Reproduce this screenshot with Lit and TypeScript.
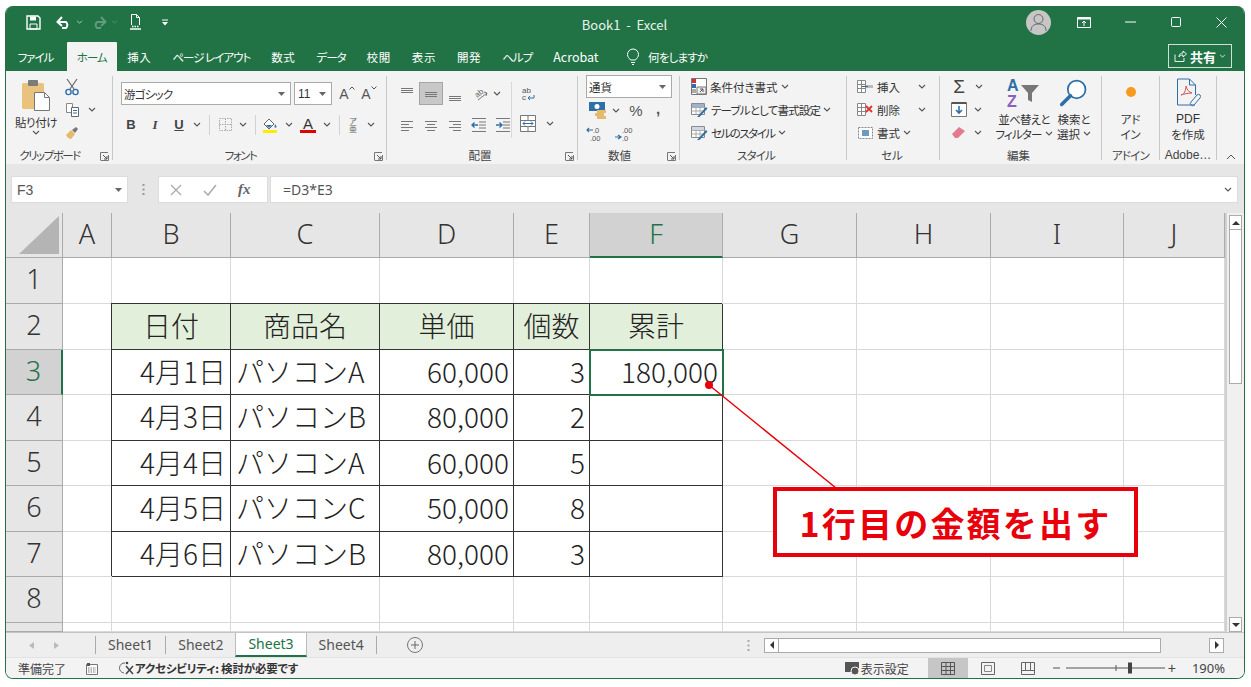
import { LitElement, html, svg, css } from 'lit';
import { customElement } from 'lit/decorators.js';

const ch = (c = '#555') => html`<svg width="8" height="5" viewBox="0 0 8 5"><path d="M1 1l3 3 3-3" fill="none" stroke="${c}" stroke-width="1.1"/></svg>`;
const launcher = html`<svg class="launch" width="9" height="9" viewBox="0 0 9 9"><path d="M.5 8V.5H8M.5 8.5h8V3" fill="none" stroke="#777"/><path d="M3 3l4 4M7 4v3H4" fill="none" stroke="#555"/></svg>`;
const lines = (ys: number[], x1s: number[], x2s: number[]) => html`<svg width="16" height="16" viewBox="0 0 16 16">${ys.map((y, i) => svg`<path d="M${x1s[i]} ${y + 0.5}H${x2s[i]}" stroke="#777" fill="none"/>`)}</svg>`;

const COLS = ['A', 'B', 'C', 'D', 'E', 'F', 'G', 'H', 'I', 'J'];
const TABLE = [
  ['日付', '商品名', '単価', '個数', '累計'],
  ['4月1日', 'パソコンA', '60,000', '3', '180,000'],
  ['4月3日', 'パソコンB', '80,000', '2', ''],
  ['4月4日', 'パソコンA', '60,000', '5', ''],
  ['4月5日', 'パソコンC', '50,000', '8', ''],
  ['4月6日', 'パソコンB', '80,000', '3', ''],
];
const TABS = [['挿入', 'j'], ['ページ レイアウト', 'k'], ['数式', 'j'], ['データ', 'k'], ['校閲', 'j'], ['表示', 'j'], ['開発', 'j'], ['ヘルプ', 'k'], ['Acrobat', 'l']];

@customElement('app-root')
export class AppRoot extends LitElement {
  static styles = css`
    :host { display: block; height: 687px; box-sizing: border-box; padding: 6px 6px 8px 5px; background: #fff; overflow: hidden;
      font-family: "Noto Sans CJK JP", "Noto Sans", sans-serif; font-feature-settings: "palt"; color: #333; font-size: 11.5px; }
    svg { display: block; flex: none; }
    .window { height: 673px; display: flex; flex-direction: column; border: 1px solid #217346; border-top: 0; border-radius: 8px; overflow: hidden; background: #f3f3f3; box-sizing: border-box; }
    .k1 { letter-spacing: -.8px; }
    .k2 { letter-spacing: -1.5px; }

    .title { height: 36px; background: #217346; color: #fff; display: flex; align-items: center; position: relative; padding-bottom: 4px; box-sizing: border-box; flex: none; }
    .qat { display: flex; align-items: center; padding-left: 20px; }
    .book { position: absolute; left: 0; right: 0; margin-left: -1px; text-align: center; font-size: 13px; top: 9px; line-height: 20px; color: #eaf3ee; }
    .win { margin-left: auto; display: flex; align-items: center; padding-right: 17px; }
    .avatar { width: 25px; height: 25px; border-radius: 50%; background: #c6c6c6; display: flex; align-items: center; justify-content: center; margin-right: 26px; }
    .tabs { height: 29px; background: #217346; color: #fff; display: flex; align-items: stretch; padding-left: 1px; flex: none; font-size: 11.5px; }
    .tab { padding: 0 10.5px; display: flex; align-items: center; white-space: nowrap; }
    .tab.k { letter-spacing: -1px; }
    .tab.j { letter-spacing: .6px; }
    .tab.l { font-size: 12.5px; }
    .tab.on { background: #f3f3f3; color: #217346; margin: 0 0 0 3px; padding: 0 10px; border-radius: 1px 1px 0 0; }
    .tell { display: flex; align-items: center; gap: 8px; margin-left: 17px; }
    .share { margin: 2px 12px 3px auto; width: 64px; box-sizing: border-box; border: 1px solid #cfe0d6; display: flex; align-items: center; justify-content: center; gap: 3px; font-weight: 700; font-size: 13px; }

    .ribbon { height: 93px; flex: none; display: grid; grid-template-columns: 107px 274px 191px 102px 167px 93px 162px 58px 57px 1fr; background: #f3f3f3; }
    .group { margin: 5px 0 4px; border-right: 1px solid #c8c8c8; display: flex; flex-direction: column; min-width: 0; }
    .group.end { border: 0; }
    .body { height: 72px; display: flex; box-sizing: border-box; }
    .label { height: 12px; line-height: 15px; position: relative; text-align: center; white-space: nowrap; font-size: 11.5px; color: #444; }
    .launch { position: absolute; right: 3px; top: 4px; }
    .col { display: flex; flex-direction: column; }
    .row { display: flex; align-items: center; height: 23px; }
    .c { display: flex; align-items: center; justify-content: center; flex: none; height: 23px; }
    .w8 { width: 8px; } .w12 { width: 12px; } .w16 { width: 16px; } .w20 { width: 20px; } .w22 { width: 22px; } .w24 { width: 24px; } .w26 { width: 26px; } .w28 { width: 28px; } .w32 { width: 32px; }
    .sep::after { content: ''; width: 1px; height: 20px; background: #d2d2d2; }
    .combo { background: #fff; border: 1px solid #aaa; box-sizing: border-box; height: 23px; display: flex; align-items: center; padding: 0 5px 0 2px; justify-content: space-between; font-size: 11.5px; }
    .combo.name { width: 170px; } .combo.size { width: 38px; margin-left: 3px; font-family: "Liberation Sans", sans-serif; font-size: 12px; padding-left: 3px; }
    .combo.fmt { width: 86px; }
    .sel { background: #c8c8c8; border: 1px solid #a5a5a5; box-sizing: border-box; }
    .big { display: flex; flex-direction: column; align-items: center; text-align: center; line-height: 15px; font-size: 11.5px; }
    .big svg { margin-bottom: 2px; }
    .txt { display: flex; align-items: center; gap: 3px; white-space: nowrap; }
    .grow { display: flex; align-items: flex-start; font-family: "Liberation Sans", sans-serif; font-size: 14px; color: #555; line-height: 16px; }
    .phon { display: flex; flex-direction: column; align-items: center; font-family: "Noto Sans CJK JP", sans-serif; font-size: 8px; line-height: 8px; color: #666; }

    .fbar { height: 49px; flex: none; background: #e6e6e6; display: flex; align-items: flex-start; padding: 12px 6px 0 5px; box-sizing: border-box; color: #555; font-size: 13px; }
    .nbox, .btns, .input { height: 27px; background: #fff; border: 1px solid #dcdcdc; box-sizing: border-box; display: flex; align-items: center; }
    .nbox { width: 117px; justify-content: space-between; padding: 0 5px; font-family: "Liberation Sans", sans-serif; font-size: 14px; }
    .dots { width: 30px; height: 27px; display: flex; justify-content: center; align-items: center; }
    .btns { width: 110px; justify-content: space-around; padding: 0 6px 0 0; }
    .fx { font-family: "Liberation Serif", serif; font-style: italic; font-size: 15px; font-weight: 700; color: #666; }
    .input { flex: 1; margin-left: 2px; padding: 0 5px 0 12px; justify-content: space-between; font-family: "Noto Sans", sans-serif; font-size: 14px; }

    .sheet { height: 419px; flex: none; display: flex; background: #fff; position: relative; }
    .grid { display: grid; grid-template-columns: 57px 49px 119px 149px 134px 76px 133px 134px 134px 133px 101px; grid-template-rows: 45px 46px 46px 45px 46px 45px 46px 45px 46px 9px; width: 1219px; flex: none; overflow: hidden; font-size: 28px; font-feature-settings: normal; font-weight: 300; color: #222; }
    .cell { border-right: 1px solid #d9d9d9; border-bottom: 1px solid #d9d9d9; box-sizing: border-box; line-height: 42px; overflow: hidden; white-space: nowrap; }
    .hd, .rh { background: #e6e6e6; text-align: center; border-color: #ababab; font-family: "Noto Sans", sans-serif; font-size: 27px; color: #333; }
    .hd.on, .rh.on { background: #d2d2d2; color: #217346; }
    .hd.on { border-bottom: 2px solid #217346; }
    .rh.on { border-right: 2px solid #217346; }
    .corner { background: #e6e6e6; border-right: 1px solid #ababab; border-bottom: 1px solid #ababab; display: flex; align-items: flex-end; justify-content: flex-end; padding: 0 3px 3px 0; box-sizing: border-box; }
    .t { border-right: 1px solid #333; border-bottom: 1px solid #333; box-shadow: -1px -1px 0 #333; text-align: right; padding-right: 4px; }
    .t.head { background: #e2efda; text-align: center; padding: 0; }
    .t.left { text-align: left; padding: 0 0 0 5px; }
    .t.active { outline: 2px solid #217346; outline-offset: -1px; position: relative; }
    .vbar { flex: 1; background: #f0f0f0; display: flex; flex-direction: column; padding: 2px 2px 0; border-left: 2px solid #d0d0d0; }
    .vbtn { height: 15px; background: #fff; border: 1px solid #ababab; box-sizing: border-box; display: flex; align-items: center; justify-content: center; flex: none; }
    .thumb { height: 154px; background: #fff; border: 1px solid #ababab; border-top: 0; box-sizing: border-box; flex: none; }
    .vbar .gap { flex: 1; }
    .callout { position: absolute; left: 767px; top: 274px; width: 365px; height: 70px; box-sizing: border-box; border: 4px solid #e8000b; background: #fff; color: #e8000b; font-size: 34px; font-weight: 700; display: flex; align-items: center; justify-content: center; letter-spacing: 2.2px; font-feature-settings: normal; }
    .arrow { position: absolute; left: 0; top: 0; }

    .sheets { height: 25px; flex: none; background: #eeeeee; border-top: 1px solid #c4c4c4; box-sizing: border-box; display: flex; align-items: center; font-family: "Noto Sans", sans-serif; font-size: 14px; color: #555; }
    .nav { width: 89px; display: flex; gap: 20px; padding-left: 23px; box-sizing: border-box; flex: none; }
    .stab { padding: 0 12px; display: flex; align-items: center; line-height: 22px; box-sizing: border-box; border-left: 1px solid #aaa; height: 18px; flex: none; }
    .stab.on { background: #fff; color: #217346; height: 24px; border: 0; border-bottom: 2px solid #217346; border-left: 1px solid #bbb; border-right: 1px solid #bbb; padding: 0 12px; }
    .stab.on + .stab { border-left: 0; }
    .stab.last { border-right: 1px solid #aaa; }
    .plus { margin-left: 30px; }
    .hbar { margin-left: auto; display: flex; align-items: center; height: 15px; margin-right: 20px; }
    .hbtn { width: 15px; height: 15px; background: #fff; border: 1px solid #ababab; box-sizing: border-box; display: flex; align-items: center; justify-content: center; }
    .htrack { width: 382px; height: 15px; background: #fff; border: 1px solid #ababab; box-sizing: border-box; margin-right: 48px; border-left: 0; }

    .status { flex: 1; background: #f3f3f3; border-top: 1px solid #e2e2e2; display: flex; align-items: center; padding-left: 12px; font-size: 12px; color: #444; box-sizing: border-box; }
    .acc { font-weight: 700; font-size: 11.5px; color: #333; letter-spacing: -.2px; }
    .right { margin-left: auto; display: flex; align-items: stretch; height: 100%; }
    .vw { width: 40px; display: flex; align-items: center; justify-content: center; }
    .vw.on { background: #c6c6c6; }
    .zoom { display: flex; align-items: center; margin-left: 5px; }
    .pct { font-family: "Noto Sans", sans-serif; font-size: 13px; margin: 0 19px 0 16px; align-self: center; }
  `;

  private renderClipboard() {
    return html`<div class="group">
      <div class="body">
        <div class="col big" style="width:58px;padding:3px 0 0 2px;box-sizing:border-box">
          <svg width="30" height="32" viewBox="0 0 30 32"><rect x="1" y="4" width="22" height="26" rx="1.5" fill="#e9c27d"/><rect x="7" y="1" width="10" height="6" rx="1" fill="#7b7b7b"/><path d="M13.5 13.5h10l5 5v13h-15z" fill="#fff" stroke="#777"/><path d="M23.5 13.5v5h5" fill="none" stroke="#777"/></svg>
          <span style="font-size:11.5px;line-height:15px;margin-top:2px;white-space:nowrap;letter-spacing:-.4px">貼り付け</span>${ch()}
        </div>
        <div class="col" style="width:18px;margin-top:-1px">
          <div class="c w16"><svg width="16" height="18" viewBox="0 0 16 18"><path d="M3 1l7 10M13 1L6 11" stroke="#666" fill="none" stroke-width="1.2"/><circle cx="4.5" cy="14" r="2.6" fill="none" stroke="#2f6fa8" stroke-width="1.4"/><circle cx="11.5" cy="14" r="2.6" fill="none" stroke="#2f6fa8" stroke-width="1.4"/></svg></div>
          <div class="c w16"><svg width="15" height="15" viewBox="0 0 15 15"><path d="M1.5 1.5h6v9h-6z" fill="#fff" stroke="#888"/><path d="M6.5 5.5h7v9h-7z" fill="#fff" stroke="#666"/><path d="M8 8.5h4M8 11h4" stroke="#2f6fa8"/></svg></div>
          <div class="c w16"><svg width="15" height="15" viewBox="0 0 15 15"><path d="M1 10l5-5 4 4-4 5c-2 0-4-2-5-4z" fill="#e5bb6b"/><path d="M7 5l4-3 2 2-3 4z" fill="#777"/></svg></div>
        </div>
        <div class="col" style="width:18px;margin-top:22px"><div class="c w16" style="margin-left:2px">${ch()}</div></div>
      </div>
      <div class="label k2" style="padding-right:19px">クリップボード${launcher}</div>
    </div>`;
  }

  private renderFont() {
    return html`<div class="group">
      <div class="body"><div class="col" style="padding:6px 0 0 8px;gap:8px">
        <div class="row">
          <div class="combo name"><span class="k1">游ゴシック</span><svg width="7" height="4" viewBox="0 0 7 4"><path d="M0 0h7L3.500 4z" fill="#666"/></svg></div>
          <div class="combo size"><span>11</span><svg width="7" height="4" viewBox="0 0 7 4"><path d="M0 0h7L3.500 4z" fill="#666"/></svg></div>
          <div class="c w22 grow" style="margin-left:4px;padding-top:4px;box-sizing:border-box"><span>A</span><svg width="6" height="4" viewBox="0 0 6 4"><path d="M.5 3.500L3 1l2.500 2.500" fill="none" stroke="#555"/></svg></div>
          <div class="c w22 grow" style="padding-top:4px;box-sizing:border-box"><span>A</span><svg width="6" height="4" viewBox="0 0 6 4"><path d="M.5.500L3 3 5.500.500" fill="none" stroke="#555"/></svg></div>
        </div>
        <div class="row" style="margin-left:-2px;font-family:'Liberation Sans';font-size:13px;color:#444">
          <div class="c w24"><b>B</b></div>
          <div class="c w24"><b style="font-family:'Liberation Serif'"><i>I</i></b></div>
          <div class="c w24"><b style="text-decoration:underline">U</b></div>
          <div class="c w12">${ch()}</div>
          <div class="c w12 sep"></div>
          <div class="c w20"><svg width="15" height="15" viewBox="0 0 15 15"><path d="M1.500 1.500h12v12h-12zM7.500 1.500v12M1.500 7.500h12" fill="none" stroke="#aaa" stroke-dasharray="1.500 1"/></svg></div>
          <div class="c w16">${ch()}</div>
          <div class="c w8 sep"></div>
          <div class="c w22"><svg width="16" height="17" viewBox="0 0 16 17"><path d="M2 8l5-5 5 5-5 5z" fill="#fff" stroke="#666"/><path d="M4 9h6l-3 3z" fill="#2f6fa8"/><path d="M13 8c1 1.500 1.500 2 1.500 3s-2 1-2-.2z" fill="#2f6fa8"/><rect x="1" y="14" width="14" height="3" fill="#ffec00"/></svg></div>
          <div class="c w16">${ch()}</div>
          <div class="c w22"><svg width="16" height="17" viewBox="0 0 16 17"><text x="8" y="12.500" text-anchor="middle" font-size="15" font-family="Liberation Sans" fill="#333">A</text><rect x="0" y="14" width="16" height="3" fill="#e00000"/></svg></div>
          <div class="c w16">${ch()}</div>
          <div class="c w8 sep"></div>
          <div class="c w20"><div class="phon"><span>ア</span><span>亜</span></div></div>
          <div class="c w16">${ch()}</div>
        </div>
      </div></div>
      <div class="label k2" style="padding-right:18px">フォント${launcher}</div>
    </div>`;
  }

  private renderAlign() {
    const l = (n: number) => n === 0 ? lines([2, 4, 6], [2, 2, 2], [14, 14, 14]) : n === 1 ? lines([6, 8, 10], [2, 2, 2], [14, 14, 14]) : lines([10, 12, 14], [2, 2, 2], [14, 14, 14]);
    const indent = (dir: number) => html`<svg width="16" height="16" viewBox="0 0 16 16"><path d="M1 1.500h14M8 5h7M8 8h7M8 11h7M1 14.500h14" stroke="#777" fill="none"/><path d="${dir ? 'M1 8h6M4.500 5.500L7 8l-2.500 2.500' : 'M7 8H1M3.500 5.500L1 8l2.500 2.500'}" stroke="#2f6fa8" stroke-width="1.400" fill="none"/></svg>`;
    return html`<div class="group">
      <div class="body" style="padding-top:6px">
        <div class="col" style="padding-left:8px;gap:8px;width:124px;box-sizing:border-box">
          <div class="row">
            <div class="c w24">${l(0)}</div><div class="c w24 sel">${l(1)}</div><div class="c w24">${l(2)}</div>
            <div class="c w26"><svg width="20" height="18" viewBox="0 0 20 18"><text x="5" y="11" font-size="8" font-family="Liberation Sans" fill="#666" transform="rotate(-40 9 9)">ab</text><path d="M8 15l9-7M14 7l3 1-1 3" stroke="#777" fill="none"/></svg></div>
            <div class="c w8">${ch()}</div>
          </div>
          <div class="row">
            <div class="c w24">${lines([4, 7, 10, 13], [2, 2, 2, 2], [14, 10, 14, 10])}</div><div class="c w24">${lines([4, 7, 10, 13], [2, 4, 2, 4], [14, 12, 14, 12])}</div><div class="c w24">${lines([4, 7, 10, 13], [2, 6, 2, 6], [14, 14, 14, 14])}</div>
            <div class="c w24">${indent(0)}</div><div class="c w24">${indent(1)}</div>
          </div>
        </div>
        <div class="col" style="border-left:1px solid #d8d8d8;height:56px;gap:6px">
          <div class="c w32" style="height:24px"><svg width="16" height="16" viewBox="0 0 16 16"><text x="2" y="7" font-size="8" font-family="Liberation Sans" fill="#555">ab</text><text x="2" y="14" font-size="8" font-family="Liberation Sans" fill="#555">c</text><path d="M14 9v3H8M10 10l-2 2 2 2" stroke="#2f6fa8" fill="none"/></svg></div>
          <div class="row"><div class="c w32"><svg width="16" height="17" viewBox="0 0 16 17"><path d="M.500.500h15v16H.500zM.500 5.500h15M.500 11.500h15M8 .5v5M8 11.500v5" fill="#fff" stroke="#777"/><path d="M3 8.500h10M5 6.500l-2 2 2 2M11 6.500l2 2-2 2" stroke="#2f6fa8" fill="none"/></svg></div><div class="c w12">${ch()}</div></div>
        </div>
      </div>
      <div class="label" style="padding-right:4px">配置${launcher}</div>
    </div>`;
  }

  private renderNumber() {
    const dec = (a: string, b: string, dir: number) => html`<svg width="20" height="16" viewBox="0 0 20 16"><text x="${dir ? 8 : 7}" y="7" font-size="7.500" font-family="Liberation Sans" fill="#555">${a}</text><text x="${dir ? 8 : 4}" y="15" font-size="7.500" font-family="Liberation Sans" fill="#555">${b}</text><path d="${dir ? 'M1 11h6M4 9l3 2-3 2' : 'M1 4h6M3 2L1 4l2 2'}" stroke="#2f6fa8" stroke-width="1.200" fill="none"/></svg>`;
    return html`<div class="group">
      <div class="body"><div class="col" style="padding-left:8px;margin-top:-1px">
        <div class="combo fmt"><span>通貨</span><svg width="7" height="4" viewBox="0 0 7 4"><path d="M0 0h7L3.500 4z" fill="#666"/></svg></div>
        <div class="row" style="margin-top:1px">
          <div class="c w24"><svg width="18" height="17" viewBox="0 0 18 17"><rect x="0" y="0" width="16" height="9" fill="#2f6fa8"/><circle cx="8" cy="4.500" r="2.500" fill="#fff"/><rect x="8" y="8" width="9" height="3" fill="#e5bb6b"/><rect x="6" y="11" width="9" height="3" fill="#e5bb6b"/><rect x="8" y="14" width="9" height="3" fill="#e5bb6b"/></svg></div>
          <div class="c w12">${ch()}</div>
          <div class="c w28" style="font-family:'Liberation Sans';font-size:15px;color:#555">%</div>
          <div class="c w16" style="font-family:'Liberation Sans';font-size:15px;font-weight:700;color:#555"><span style="margin-top:-4px">,</span></div>
        </div>
        <div class="row" style="gap:8px">${dec('.0', '.00', 0)}${dec('.00', '.0', 1)}</div>
      </div></div>
      <div class="label" style="padding-right:18px">数値${launcher}</div>
    </div>`;
  }

  private renderStyles() {
    const tbl = (c: string) => html`<svg width="17" height="17" viewBox="0 0 17 17"><path d="M.500 2.500h13v11H.500z" fill="#fff" stroke="#888"/><path d="M.500 6.500h13M.500 10h13M5 2.500v11M9 2.500v11" stroke="#aaa"/><rect x="1" y="3" width="12" height="3" fill="${c}"/><path d="M7 15l8-9 1.500 1.500-8 8.500H6z" fill="#2f6fa8"/></svg>`;
    return html`<div class="group">
      <div class="body"><div class="col" style="padding-left:11px;margin-top:-1px">
        <div class="row txt"><svg width="16" height="17" viewBox="0 0 16 17"><path d="M.500.500h15v16H.500z" fill="#fff" stroke="#777"/><rect x="1" y="1" width="4" height="4" fill="#c33"/><rect x="1" y="6" width="4" height="4" fill="#2f6fa8"/><rect x="1" y="11" width="4" height="4" fill="#aaa"/><path d="M6 9h9v7H6z" fill="#eee" stroke="#777"/><path d="M9 14l3-3M9 11h3v3" stroke="#555" fill="none"/></svg><span>条件付き書式</span>${ch()}</div>
        <div class="row txt">${tbl('#9db4cc')}<span class="k1">テーブルとして書式設定</span>${ch()}</div>
        <div class="row txt">${tbl('#cfd8e2')}<span class="k2">セルのスタイル</span>${ch()}</div>
      </div></div>
      <div class="label k1" style="padding-right:14px">スタイル</div>
    </div>`;
  }

  private renderCells() {
    const ico = (mark: unknown) => html`<svg width="17" height="15" viewBox="0 0 17 15"><path d="M.500 1.500h8v12h-8zM.500 5.500h8M.500 9.500h8M4.500 1.500v12" fill="#fff" stroke="#888"/>${mark}</svg>`;
    return html`<div class="group">
      <div class="body"><div class="col" style="padding-left:10px;margin-top:-1px">
        <div class="row txt">${ico(svg`<path d="M9 6h7v3H9z" fill="#bbb"/><path d="M5 7.500h6" stroke="#2f6fa8"/>`)}<span style="width:38px">挿入</span>${ch()}</div>
        <div class="row txt">${ico(svg`<path d="M9 4l6 6M15 4l-6 6" stroke="#d33" stroke-width="1.800"/>`)}<span style="width:38px">削除</span>${ch()}</div>
        <div class="row txt"><svg width="17" height="15" viewBox="0 0 17 15"><path d="M1.500 2.500h14v11h-14z" fill="#fff" stroke="#888" stroke-dasharray="2 1"/><rect x="5" y="5" width="7" height="6" fill="#2f6fa8" opacity=".7"/></svg><span>書式</span>${ch()}</div>
      </div></div>
      <div class="label" style="padding-right:2px">セル</div>
    </div>`;
  }

  private renderEdit() {
    return html`<div class="group">
      <div class="body">
        <div class="col" style="padding-left:11px;margin-top:-1px;width:38px;flex:none">
          <div class="row"><div class="c w16" style="font-size:19px;font-family:'Liberation Sans';color:#444;margin-right:8px">Σ</div>${ch()}</div>
          <div class="row"><svg style="margin-right:7px" width="16" height="15" viewBox="0 0 16 15"><path d="M.500 1h15v13.500H.500z" fill="#fff" stroke="#777"/><path d="M.500 1h15" stroke="#555" stroke-width="2"/><path d="M8 4v7M5 8l3 3 3-3" stroke="#2f6fa8" stroke-width="1.600" fill="none"/></svg>${ch()}</div>
          <div class="row"><svg style="margin-right:7px" width="16" height="15" viewBox="0 0 16 15"><path d="M1 9l7-7 6 4-7 7H4z" fill="#e27b90"/></svg>${ch()}</div>
        </div>
        <div class="big" style="width:62px;margin-left:4px;margin-top:1px">
          <svg width="34" height="32" viewBox="0 0 34 32" style="margin-bottom:3px"><text x="0" y="14" font-size="16" font-weight="700" font-family="Liberation Sans" fill="#2f6fa8">A</text><text x="0" y="30" font-size="16" font-weight="700" font-family="Liberation Sans" fill="#8a5fc0">Z</text><path d="M14 8h18l-7 8v9l-4-2v-7z" fill="#777"/></svg>
          <span class="k1" style="white-space:nowrap">並べ替えと</span><span class="txt k1">フィルター ${ch()}</span>
        </div>
        <div class="big" style="width:38px;margin-top:1px">
          <svg width="30" height="32" viewBox="0 0 34 32" style="margin-bottom:3px"><circle cx="20" cy="12" r="10" fill="#fff" stroke="#2f6fa8" stroke-width="2"/><path d="M13 19L3 29" stroke="#2f6fa8" stroke-width="4" stroke-linecap="round"/></svg>
          <span style="white-space:nowrap">検索と</span><span class="txt">選択 ${ch()}</span>
        </div>
      </div>
      <div class="label" style="padding-right:4px">編集</div>
    </div>`;
  }

  render() {
    return html`<div class="window">
      <div class="title">
        <div class="qat">
          <svg width="15" height="15" viewBox="0 0 15 15"><path d="M1 1h11l2 2v11H1z" fill="none" stroke="#fff" stroke-width="1.400"/><path d="M4 1.500h6v4H4z" fill="#fff"/><path d="M4 9h7v5H4z" fill="none" stroke="#fff"/></svg>
          <svg style="margin-left:15px" width="16" height="13" viewBox="0 0 16 13"><path d="M2 6h8a4 4 0 0 1 0 6H6M6 1L1.500 6 6 10" fill="none" stroke="#fff" stroke-width="2"/></svg>
          <svg style="margin-left:4px" width="7" height="4" viewBox="0 0 8 5"><path d="M1 1l3 3 3-3" stroke="#cfe0d6" fill="none"/></svg>
          <svg style="margin-left:8px" width="16" height="13" viewBox="0 0 16 13"><path d="M14 6H6a4 4 0 0 0 0 6h4M10 1l4.500 5L10 10" fill="none" stroke="#5f9b7c" stroke-width="2"/></svg>
          <svg style="margin-left:4px" width="7" height="4" viewBox="0 0 8 5"><path d="M1 1l3 3 3-3" stroke="#5f9b7c" fill="none"/></svg>
          <svg style="margin-left:11px" width="13" height="16" viewBox="0 0 13 16"><path d="M2.500 11V.500h5l3 3V11" fill="none" stroke="#fff"/><path d="M7.500.5v3h3" fill="none" stroke="#fff"/><path d="M1 15h11" stroke="#fff" stroke-width="1.500"/><path d="M3 12.500h7" stroke="#fff" stroke-dasharray="1.500 1" stroke-width="1.500"/></svg>
          <svg style="margin-left:20px" width="6" height="7" viewBox="0 0 6 7"><path d="M0 1h6" stroke="#fff"/><path d="M0 3h6L3 6.500z" fill="#fff"/></svg>
        </div>
        <div class="book">Book1&nbsp; -&nbsp; Excel</div>
        <div class="win">
          <div class="avatar"><svg width="17" height="18" viewBox="0 0 17 18"><circle cx="8.500" cy="6" r="4.500" fill="none" stroke="#666"/><path d="M1 18c0-5 3-7 7.500-7S16 13 16 18" fill="none" stroke="#666"/></svg></div>
          <svg width="14" height="12" viewBox="0 0 14 12"><path d="M.500 1.500h13v10H.500z" fill="none" stroke="#fff"/><path d="M.5 2.500h13" stroke="#fff" stroke-width="2"/><path d="M7 10V5M5 7l2-2 2 2" stroke="#fff" fill="none"/></svg>
          <svg style="margin-left:34px" width="11" height="2" viewBox="0 0 11 2"><path d="M0 1h11" stroke="#fff"/></svg>
          <svg style="margin-left:35px" width="10" height="10" viewBox="0 0 10 10"><rect x=".5" y=".5" width="9" height="9" rx="1" fill="none" stroke="#fff"/></svg>
          <svg style="margin-left:35px" width="11" height="11" viewBox="0 0 11 11"><path d="M.5.500l10 10M10.500.500l-10 10" stroke="#fff"/></svg>
        </div>
      </div>
      <div class="tabs">
        <div class="tab k">ファイル</div>
        <div class="tab on k">ホーム</div>
        ${TABS.map(([t, k]) => html`<div class="tab ${k}">${t}</div>`)}
        <div class="tell">
          <svg width="14" height="18" viewBox="0 0 14 18"><path d="M4.500 12C3 10 1.500 9 1.500 6.500a5.500 5.500 0 0 1 11 0C12.500 9 11 10 9.500 12z" fill="none" stroke="#fff"/><path d="M5 14.500h4M6 16.500h2" stroke="#fff"/></svg>
          <span class="k1">何をしますか</span>
        </div>
        <div class="share">
          <svg width="13" height="12" viewBox="0 0 13 12"><path d="M1 4.500v7h9V8M5 7c0-3 2-4 4-4V1l3.500 3L9 7V5C7 5 6 5.500 5 7z" fill="none" stroke="#fff" stroke-width=".9"/></svg>
          <span>共有</span>
          <svg width="7" height="4" viewBox="0 0 8 5"><path d="M1 1l3 3 3-3" stroke="#fff" fill="none"/></svg>
        </div>
      </div>

      <div class="ribbon">
        ${this.renderClipboard()}${this.renderFont()}${this.renderAlign()}${this.renderNumber()}${this.renderStyles()}${this.renderCells()}${this.renderEdit()}
        <div class="group">
          <div class="body big" style="padding-top:6px">
            <svg width="12" height="26" viewBox="0 0 12 26" style="margin-bottom:4px"><circle cx="6" cy="10" r="5" fill="#f79a1f"/></svg>
            <span>アド</span><span>イン</span>
          </div>
          <div class="label k1">アドイン</div>
        </div>
        <div class="group">
          <div class="body big" style="padding-top:2px">
            <svg width="26" height="30" viewBox="0 0 26 30" style="margin-bottom:4px"><path d="M2.500 1h12l6 6v10M20 27H2.500V1" fill="none" stroke="#2f6fa8"/><path d="M14.500 1v6h6" fill="none" stroke="#2f6fa8"/><path d="M6 17c3 0 5-5 5-9 1 4 3 6 6 7-4 0-8 1-11 2z" fill="none" stroke="#c55"/><path d="M16 24l6-7a2 2 0 0 1 3 3l-6 7a2 2 0 0 1-3-3z" fill="none" stroke="#2f6fa8"/></svg>
            <span style="font-family:'Liberation Sans';font-size:12px">PDF</span><span>を作成</span>
          </div>
          <div class="label" style="font-family:'Liberation Sans';font-size:12px">Adobe…</div>
        </div>
        <div class="group end">
          <div class="body"></div>
          <svg style="margin:6px 0 0 9px" width="10" height="6" viewBox="0 0 10 6"><path d="M1 5l4-4 4 4" fill="none" stroke="#555"/></svg>
        </div>
      </div>

      <div class="fbar">
        <div class="nbox"><span>F3</span><svg width="7" height="4" viewBox="0 0 7 4"><path d="M0 0h7L3.500 4z" fill="#666"/></svg></div>
        <div class="dots"><svg width="3" height="11" viewBox="0 0 3 11"><path d="M1.500 0v2M1.500 4.500v2M1.500 9v2" stroke="#999" stroke-width="2"/></svg></div>
        <div class="btns">
          <svg width="12" height="12" viewBox="0 0 12 12"><path d="M1 1l10 10M11 1L1 11" stroke="#aaa" stroke-width="1.300"/></svg>
          <svg width="14" height="12" viewBox="0 0 14 12"><path d="M1 7l4 4 8-10" stroke="#aaa" fill="none" stroke-width="1.500"/></svg>
          <span class="fx">fx</span>
        </div>
        <div class="input"><span>=D3*E3</span>${ch()}</div>
      </div>

      <div class="sheet">
        <div class="grid">
          <div class="corner"><svg width="40" height="38" viewBox="0 0 40 38"><path d="M40 0v38H0z" fill="#b4b4b4"/></svg></div>
          ${COLS.map(n => html`<div class="cell hd ${n === 'F' ? 'on' : ''}">${n}</div>`)}
          ${[1, 2, 3, 4, 5, 6, 7, 8, 9].map(r => html`
            <div class="cell rh ${r === 3 ? 'on' : ''}">${r < 9 ? r : ''}</div>
            ${COLS.map((_c, i) => {
              const row = TABLE[r - 2];
              const inTable = row && i >= 1 && i <= 5;
              if (!inTable) return html`<div class="cell"></div>`;
              const cls = r === 2 ? 'head' : i === 2 ? 'left' : '';
              return html`<div class="cell t ${cls} ${r === 3 && i === 5 ? 'active' : ''}">${row[i - 1]}</div>`;
            })}`)}
        </div>
        <div class="vbar">
          <div class="vbtn"><svg width="8" height="4" viewBox="0 0 8 4"><path d="M4 0l4 4H0z" fill="#333"/></svg></div>
          <div class="thumb"></div>
          <div class="gap"></div>
          <div class="vbtn"><svg width="8" height="4" viewBox="0 0 8 4"><path d="M4 4L0 0h8z" fill="#333"/></svg></div>
        </div>
        <svg class="arrow" width="840" height="280" viewBox="0 0 840 280"><circle cx="703" cy="172" r="4" fill="#e8000b"/><path d="M703 172L830 275" stroke="#e8000b" stroke-width="1.500"/></svg>
        <div class="callout">1行目の金額を出す</div>
      </div>

      <div class="sheets">
        <div class="nav">
          <svg width="5" height="7" viewBox="0 0 5 7"><path d="M5 0v7L0 3.500z" fill="#bbb"/></svg>
          <svg width="5" height="7" viewBox="0 0 5 7"><path d="M0 0v7l5-3.500z" fill="#bbb"/></svg>
        </div>
        <div class="stab">Sheet1</div><div class="stab">Sheet2</div><div class="stab on">Sheet3</div><div class="stab last">Sheet4</div>
        <svg class="plus" width="16" height="16" viewBox="0 0 16 16"><circle cx="8" cy="8" r="7.500" fill="none" stroke="#777"/><path d="M8 4v8M4 8h8" stroke="#666"/></svg>
        <div class="hbar">
          <svg style="margin-right:14px" width="3" height="11" viewBox="0 0 3 11"><path d="M1.500 0v2M1.500 4.500v2M1.500 9v2" stroke="#aaa" stroke-width="2"/></svg>
          <div class="hbtn"><svg width="4" height="8" viewBox="0 0 4 8"><path d="M0 4l4-4v8z" fill="#333"/></svg></div>
          <div class="htrack"></div>
          <div class="hbtn"><svg width="4" height="8" viewBox="0 0 4 8"><path d="M4 4L0 0v8z" fill="#333"/></svg></div>
        </div>
      </div>

      <div class="status">
        <span>準備完了</span>
        <svg style="margin-left:20px" width="12" height="13" viewBox="0 0 12 13"><path d="M.500 2.500h11v10H.500z" fill="#fff" stroke="#777"/><path d="M1 1h3v3H1z" fill="#555"/><path d="M2 6h8M2 8h8M2 10h8" stroke="#777" stroke-dasharray="1.500 1"/></svg>
        <svg style="margin-left:21px;margin-right:1px" width="15" height="14" viewBox="0 0 15 14"><path d="M6 2a5 5 0 0 0-1 10" fill="none" stroke="#666"/><path d="M7 5l7 8M14 5l-7 8" stroke="#444" stroke-width="1.500"/><circle cx="8" cy="2" r="1.300" fill="#444"/></svg>
        <span class="acc">アクセシビリティ: 検討が必要です</span>
        <div class="right">
          <div class="txt" style="margin-right:19px;gap:1px;font-size:12px"><svg width="15" height="15" viewBox="0 0 15 15"><rect x="0" y="1" width="14" height="10" fill="#555"/><circle cx="10" cy="10" r="4" fill="#555" stroke="#f3f3f3"/></svg><span>表示設定</span></div>
          <div class="vw on"><svg width="14" height="13" viewBox="0 0 14 13"><path d="M.500.500h13v12H.500zM.500 4.500h13M.500 8.500h13M5 .5v12M9.500.5v12" fill="none" stroke="#555"/></svg></div>
          <div class="vw"><svg width="14" height="13" viewBox="0 0 14 13"><path d="M.500.500h13v12H.500z" fill="none" stroke="#666"/><path d="M3.500 3.500h7v6h-7z" fill="none" stroke="#888"/></svg></div>
          <div class="vw"><svg width="14" height="13" viewBox="0 0 14 13"><path d="M.500.500h13v12H.500zM.500 8.500h13M4.500.5v8M9.500.5v8" fill="none" stroke="#666"/></svg></div>
          <div class="zoom">
            <svg width="112" height="14" viewBox="0 0 112 14"><path d="M0 7h7M13 7h100" stroke="#555"/><path d="M63 4v6" stroke="#555"/><rect x="75" y="1.500" width="4" height="11" fill="#444"/></svg>
            <span style="font-family:'Liberation Sans';font-size:14px;margin-left:3px">+</span>
          </div>
          <div class="pct">190%</div>
        </div>
      </div>
    </div>`;
  }
}
